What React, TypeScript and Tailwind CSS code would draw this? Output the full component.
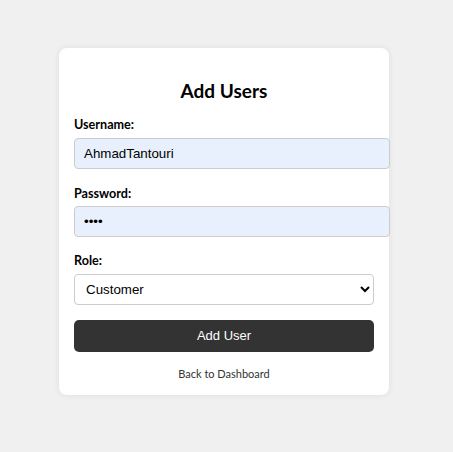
import React, { useState } from 'react';

const App: React.FC = () => {
  const [username, setUsername] = useState('AhmadTantouri');
  const [password, setPassword] = useState('1234');
  const [role, setRole] = useState('Customer');

  return (
    <div className="min-h-screen bg-[#f0f0f0] flex justify-start pl-[59px] pt-[48px] font-['Lato',sans-serif]">
      <div className="w-[330px] h-[347px] bg-white rounded-lg shadow-[0_0_6px_rgba(0,0,0,0.08)] px-[15px] pt-[33px]">
        <h2 className="text-center text-[19px] font-bold text-black leading-none mb-[19px]">Add Users</h2>

        <form onSubmit={e => e.preventDefault()}>
          <label className="block text-[12.6px] font-bold text-black leading-none mb-[6px]">Username:</label>
          <input
            type="text"
            value={username}
            onChange={e => setUsername(e.target.value)}
            className="block w-[316px] h-[31px] px-[9px] bg-[#e8f0fe] border border-[#ccc] rounded-[4px] text-[13.33px] text-black font-['Liberation_Sans',Arial,sans-serif] mb-[19px]"
          />

          <label className="block text-[12.6px] font-bold text-black leading-none mb-[6px]">Password:</label>
          <input
            type="password"
            value={password}
            onChange={e => setPassword(e.target.value)}
            className="block w-[316px] h-[31px] px-[9px] bg-[#e8f0fe] border border-[#ccc] rounded-[4px] text-[13.33px] text-black font-['Liberation_Sans',Arial,sans-serif] mb-[18px]"
          />

          <label className="block text-[12.6px] font-bold text-black leading-none mb-[6px]">Role:</label>
          <select
            value={role}
            onChange={e => setRole(e.target.value)}
            className="block w-full h-[31px] pl-[7px] pr-[6px] bg-white border border-[#ccc] rounded-[4px] text-[13.33px] text-black font-['Liberation_Sans',Arial,sans-serif] mb-[15px] appearance-auto"
          >
            <option>Customer</option>
            <option>Admin</option>
          </select>

          <button
            type="submit"
            className="block w-full h-[32px] bg-[#333] text-white rounded-[5px] text-[13px] font-['Liberation_Sans',Arial,sans-serif]"
          >
            Add User
          </button>
        </form>

        <div className="text-center mt-[12px] leading-none">
          <a href="#" className="text-[11px] text-[#333] leading-none">Back to Dashboard</a>
        </div>
      </div>
    </div>
  );
};

export default App;
